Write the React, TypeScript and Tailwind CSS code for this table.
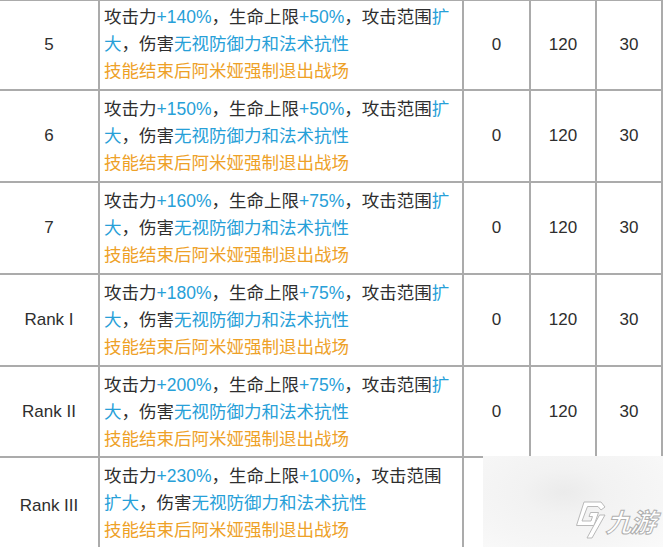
import React from "react";

type Seg = { t: string; c: "k" | "b" | "o" };

const K = (t: string): Seg => ({ t, c: "k" });
const B = (t: string): Seg => ({ t, c: "b" });
const O = (t: string): Seg => ({ t, c: "o" });

type Row = {
  level: string;
  lines: Seg[][];
  vals: string[];
  h: string;
  pt: string;
};

const makeLines = (atk: string, hp: string, wrapBefore: boolean): Seg[][] => {
  if (wrapBefore) {
    return [
      [K("攻击力"), B(atk), K("，生命上限"), B(hp), K("，攻击范围")],
      [B("扩大"), K("，伤害"), B("无视防御力和法术抗性")],
      [O("技能结束后阿米娅强制退出战场")],
    ];
  }
  return [
    [K("攻击力"), B(atk), K("，生命上限"), B(hp), K("，攻击范围"), B("扩")],
    [B("大"), K("，伤害"), B("无视防御力和法术抗性")],
    [O("技能结束后阿米娅强制退出战场")],
  ];
};

const rows: Row[] = [
  { level: "5", lines: makeLines("+140%", "+50%", false), vals: ["0", "120", "30"], h: "h-[88px]", pt: "pt-[3px]" },
  { level: "6", lines: makeLines("+150%", "+50%", false), vals: ["0", "120", "30"], h: "h-[90px]", pt: "pt-[5px]" },
  { level: "7", lines: makeLines("+160%", "+75%", false), vals: ["0", "120", "30"], h: "h-[90px]", pt: "pt-[5px]" },
  { level: "Rank I", lines: makeLines("+180%", "+75%", false), vals: ["0", "120", "30"], h: "h-[90px]", pt: "pt-[5px]" },
  { level: "Rank II", lines: makeLines("+200%", "+75%", false), vals: ["0", "120", "30"], h: "h-[89px]", pt: "pt-[5px]" },
  { level: "Rank III", lines: makeLines("+230%", "+100%", true), vals: ["", "", ""], h: "h-[95px]", pt: "pt-[5px]" },
];

const colorOf = (c: Seg["c"]) =>
  c === "b" ? "text-[#27a0d8]" : c === "o" ? "text-[#eea128]" : "text-[#2e2e2e]";

function Logo() {
  return (
    <div className="flex items-center gap-[1px]">
      <svg width="34" height="38" viewBox="0 0 34 38" className="shrink-0">
        <path
          d="M10 1 L27 1 L31 6 L27 9 L24 5.5 L13.5 5.5 L8 20 L17 20 L18.5 15.5 L15 15.5 L16.5 11.5 L24.5 11.5 L20 24.5 L2.5 24.5 Z"
          fill="#ffffff"
          stroke="#b9b9b9"
          strokeWidth="1"
          strokeLinejoin="round"
        />
        <path
          d="M25.5 14 L31 14 L18 37 L13 37 Z"
          fill="#ffffff"
          stroke="#b9b9b9"
          strokeWidth="1"
          strokeLinejoin="round"
        />
      </svg>
      <span
        className="-skew-x-[18deg] text-[26px] leading-none font-bold text-white tracking-[-2px] [-webkit-text-stroke:1px_#b0b0b0] mt-[2px]"
        style={{ fontFamily: '"Noto Sans CJK SC", sans-serif' }}
      >
        九游
      </span>
    </div>
  );
}

export default function App() {
  return (
    <div
      className="relative w-[663px] h-[547px] overflow-hidden bg-white"
      style={{ fontFamily: '"Liberation Sans", "Noto Sans CJK SC", sans-serif' }}
    >
      <div className="flex flex-col gap-[2px] bg-[#ababab] pt-[1px] pr-[2px] w-[663px]">
        {rows.map((r, i) => (
          <div
            key={i}
            className={`grid grid-cols-[98px_362px_65px_64px_64px] gap-x-[2px] ${r.h}`}
          >
            <div className="bg-white flex items-center justify-center text-[17px] text-[#2e2e2e]">
              {r.level}
            </div>
            <div className={`bg-white pl-[4px] ${r.pt} text-[17.5px] leading-[27px]`}>
              {r.lines.map((ln, j) => (
                <div key={j} className="whitespace-nowrap">
                  {ln.map((s, k) => (
                    <span key={k} className={colorOf(s.c)}>
                      {s.t}
                    </span>
                  ))}
                </div>
              ))}
            </div>
            {r.vals.map((v, j) => (
              <div
                key={j}
                className="bg-white flex items-center justify-center text-[17px] text-[#2e2e2e]"
              >
                {v}
              </div>
            ))}
          </div>
        ))}
      </div>

      <div className="absolute left-[483px] top-[456px] right-0 bottom-0 bg-[radial-gradient(ellipse_at_45%_40%,#ebebeb_0%,#f2f2f2_30%,#f6f6f6_70%,#fafafa_100%)] flex items-start">
        <div className="ml-[91px] mt-[45px]">
          <Logo />
        </div>
      </div>
    </div>
  );
}
